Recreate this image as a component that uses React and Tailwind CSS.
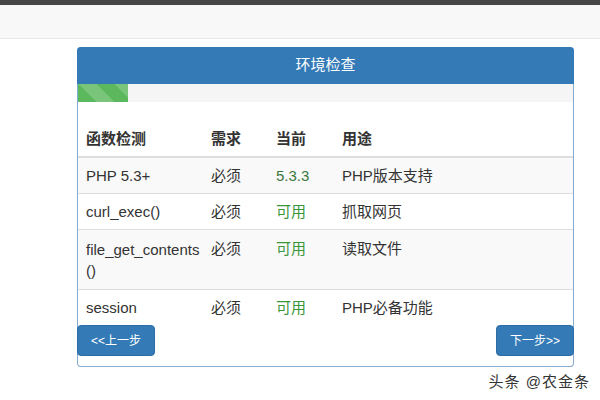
import React from "react";

const rows = [
  { name: "PHP 5.3+", req: "必须", cur: "5.3.3", curColor: "text-[#3c763d]", use: "PHP版本支持" },
  { name: "curl_exec()", req: "必须", cur: "可用", curColor: "text-[#3a963a]", use: "抓取网页" },
  { name: (<>file_get_contents<br />()</>), req: "必须", cur: "可用", curColor: "text-[#3a963a]", use: "读取文件" },
  { name: "session", req: "必须", cur: "可用", curColor: "text-[#3a963a]", use: "PHP必备功能" },
];

export default function App() {
  return (
    <div className="relative w-[600px] h-[400px] overflow-hidden bg-white text-[#333] font-['Liberation_Sans','Noto_Sans_CJK_SC',sans-serif]">
      <div className="h-[5px] bg-[#464646]" />
      <div className="h-[34px] bg-[#f8f8f8] border-b border-[#e7e7e7]" />
      <div className="pt-[8px] pl-[77px]">
        <div className="w-[497px] border-x border-b border-[#86abd0] rounded-[4px]">
          <div className="h-[37px] -mx-px bg-[#337ab7] rounded-t-[4px] flex items-center justify-center text-white text-[15px]">
            环境检查
          </div>
          <div className="h-[18px] bg-[#f5f5f5] flex">
            <div className="w-[50px] h-full bg-[#5cb85c] bg-[image:linear-gradient(45deg,rgba(255,255,255,.18)_25%,transparent_25%,transparent_50%,rgba(255,255,255,.18)_50%,rgba(255,255,255,.18)_75%,transparent_75%,transparent)] bg-[length:36px_36px]" />
          </div>
          <table className="mt-[19px] w-full table-fixed border-collapse text-[15px] leading-[19px]">
            <colgroup>
              <col className="w-[125px]" />
              <col className="w-[65px]" />
              <col className="w-[66px]" />
              <col />
            </colgroup>
            <thead>
              <tr>
                <th className="text-left font-bold px-2 py-2 border-b-2 border-[#ddd]">函数检测</th>
                <th className="text-left font-bold px-2 py-2 border-b-2 border-[#ddd]">需求</th>
                <th className="text-left font-bold px-2 py-2 border-b-2 border-[#ddd]">当前</th>
                <th className="text-left font-bold px-2 py-2 border-b-2 border-[#ddd]">用途</th>
              </tr>
            </thead>
            <tbody>
              {rows.map((r, i) => {
                const pad = i === 2 ? "px-2 pt-[9px] pb-2" : "px-2 py-2";
                const bt = i > 0 ? "border-t border-[#ddd]" : "";
                return (
                  <tr key={i} className={i % 2 === 0 ? "bg-[#f9f9f9]" : "bg-white"}>
                    <td className={`${pad} align-top ${bt} ${i === 2 ? "leading-[21px]" : ""}`}>{r.name}</td>
                    <td className={`${pad} align-top ${bt}`}>{r.req}</td>
                    <td className={`${pad} align-top ${r.curColor} ${bt}`}>{r.cur}</td>
                    <td className={`${pad} align-top ${bt}`}>{r.use}</td>
                  </tr>
                );
              })}
            </tbody>
          </table>
          <div className="-mx-px flex justify-between pb-[10px]">
            <button className="w-[78px] h-[31px] bg-[#337ab7] border border-[#2e6da4] rounded-[4px] text-white text-[12px]">&lt;&lt;上一步</button>
            <button className="w-[78px] h-[31px] bg-[#337ab7] border border-[#2e6da4] rounded-[4px] text-white text-[12px]">下一步&gt;&gt;</button>
          </div>
        </div>
      </div>
      <div className="absolute right-[10px] top-[371px] text-[15px] text-[#333] tracking-[1px]">头条 @农金条</div>
    </div>
  );
}
